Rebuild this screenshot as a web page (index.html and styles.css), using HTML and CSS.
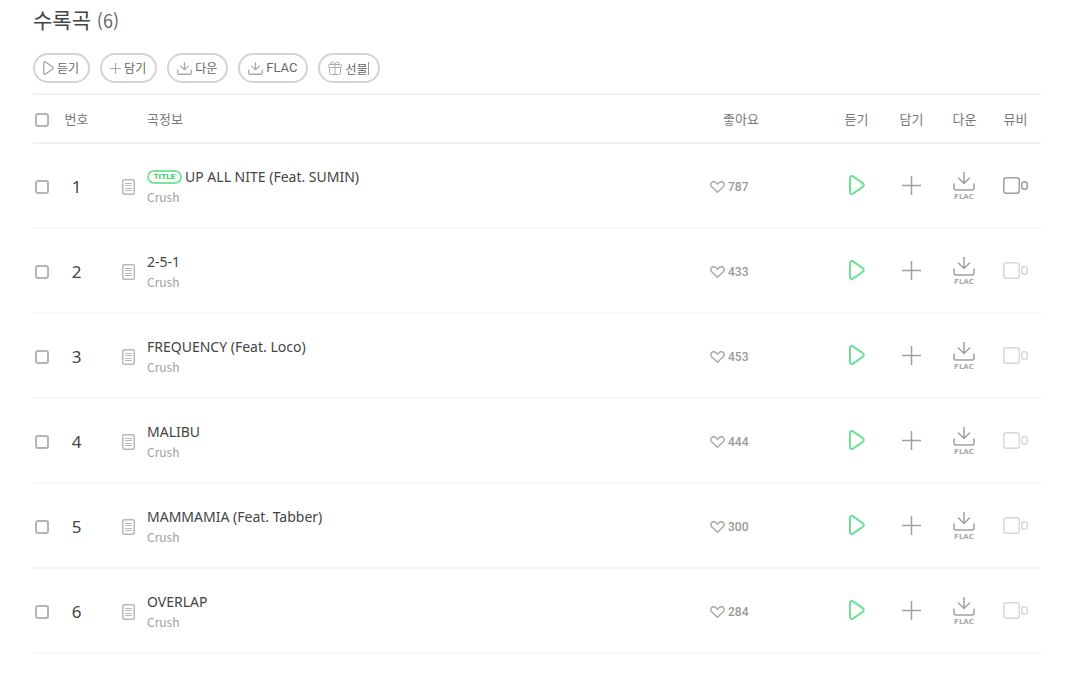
FILE: index.html
```html
<!DOCTYPE html>
<html lang="ko">
<head>
<meta charset="utf-8">
<title>수록곡</title>
<link rel="stylesheet" href="styles.css">
</head>
<body>
<svg class="sprite" aria-hidden="true">
  <symbol id="play" viewBox="0 0 16 20"><path d="M1 3v14c0 1.900 1.500 2.600 3 1.600l9.700-6.700c1.400-1 1.400-2.800 0-3.800L4 1.400C2.500.4 1 1.100 1 3z"/></symbol>
  <symbol id="download" viewBox="0 0 22 19"><path d="M11 0v11M5.500 6l5.500 5.500L16.500 6M1 12v4c0 1.200.8 2 2 2h16c1.200 0 2-.8 2-2v-4"/></symbol>
  <symbol id="plus" viewBox="0 0 19 19"><path d="M9.500 0v19M0 9.500h19"/></symbol>
  <symbol id="gift" viewBox="0 0 14 14"><path d="M1.500 3.500h11c.6 0 1 .4 1 1v1c0 .6-.4 1-1 1h-11c-.6 0-1-.4-1-1v-1c0-.6.4-1 1-1zM1.500 6.500v5c0 1.200.8 2 2 2h7c1.200 0 2-.8 2-2v-5M7 3.500v10M7 3.500C6 .5 3 0 3 2c0 1 .7 1.500 1.500 1.500M7 3.500C8 .5 11 0 11 2c0 1-.7 1.500-1.500 1.500"/></symbol>
  <symbol id="lyrics" viewBox="0 0 13 16"><rect x=".75" y=".75" width="11.500" height="14.500" rx="1.500" stroke-width="1.500"/><path d="M3.500 4.500h6M3.500 6.500h6M3.500 9.500h6M3.500 11.500h6"/></symbol>
  <symbol id="heart" viewBox="0 0 15 12"><path d="M7.500 11.200L1.700 5.800C.4 4.500.5 2.500 1.700 1.500c1.300-1.100 3.200-.9 4.300.2l1.500 1.500L9 1.700c1.100-1.100 3-1.300 4.300-.2 1.200 1 1.300 3 0 4.300z"/></symbol>
  <symbol id="video" viewBox="0 0 26 17"><rect x=".75" y=".75" width="15.500" height="15.500" rx="2.500"/><rect x="18.750" y="4.750" width="5.500" height="7.500" rx="2.500"/></symbol>
</svg>
<main class="tracks">
  <h1 class="heading">수록곡 <span class="count">(6)</span></h1>
  <div class="actions">
    <button class="pill" type="button"><svg class="pill-play"><use href="#play"/></svg>듣기</button>
    <button class="pill" type="button"><svg class="pill-plus"><use href="#plus"/></svg>담기</button>
    <button class="pill" type="button"><svg class="pill-down"><use href="#download"/></svg>다운</button>
    <button class="pill" type="button"><svg class="pill-down"><use href="#download"/></svg><span class="latin">FLAC</span></button>
    <button class="pill" type="button"><svg class="pill-gift"><use href="#gift"/></svg><span class="gift-label">선물</span></button>
  </div>
  <table class="list">
    <colgroup><col class="c-check"><col class="c-num"><col class="c-lyrics"><col><col class="c-like"><col class="c-play"><col class="c-play"><col class="c-down"><col class="c-down"></colgroup>
    <thead>
      <tr><th class="check"><input type="checkbox" aria-label="전체 선택"></th><th>번호</th><th></th><th class="song">곡정보</th><th class="like-head">좋아요</th><th>듣기</th><th>담기</th><th>다운</th><th>뮤비</th></tr>
    </thead>
    <tbody id="rows"></tbody>
  </table>
</main>
<script src="tracks.js"></script>
</body>
</html>
```

FILE: styles.css
```css
* { box-sizing: border-box; }
body { margin: 0; background: #fff; color: #444; font-family: "Noto Sans", "Noto Sans CJK KR", sans-serif; }
.sprite { display: none; }
svg { display: block; fill: none; stroke: currentColor; stroke-linecap: round; stroke-linejoin: round; flex: none; overflow: visible; }
button { padding: 0; border: 0; background: none; font: inherit; color: inherit; cursor: pointer; }
a { color: inherit; text-decoration: none; }
.tracks { padding: 4px 25px 32px 33px; }
.heading { margin: 0; font-family: "Noto Sans CJK KR", sans-serif; font-size: 21px; line-height: 30px; font-weight: 400; }
.count { color: #666; font-size: 18px; }
.actions { display: flex; gap: 10px; margin: 18px 0 10px; }
.pill { display: flex; align-items: center; gap: 3px; height: 30px; padding: 0 9px 0 8px; border: 2px solid #d4d4d4; border-radius: 15px; font-family: "Noto Sans CJK KR", sans-serif; font-size: 12px; line-height: 16px; color: #666; }
.pill svg { color: #aaa; }
.latin { font-family: Roboto, sans-serif; font-size: 13px; }
.gift-label { line-height: 13px; border-right: 1px solid #999; }
.pill-play { width: 11px; height: 14px; stroke-width: 2px; }
.pill-plus { width: 11px; height: 11px; stroke-width: 2px; }
.pill-down { width: 15px; height: 13px; stroke-width: 2px; }
.pill-gift { width: 14px; height: 14px; }
.list { width: 100%; table-layout: fixed; border-collapse: separate; border-spacing: 0; border-top: 2px solid #f0f0f0; }
.c-check { width: 26px; }
.c-num { width: 35px; }
.c-lyrics { width: 53px; }
.c-like { width: 128px; }
.c-play { width: 55px; }
.c-down { width: 51px; }
th, td { padding: 0; vertical-align: middle; text-align: center; }
th { height: 49px; border-bottom: 2px solid #f0f0f0; font-family: "Noto Sans CJK KR", sans-serif; font-size: 13px; line-height: 16px; font-weight: 400; color: #777; }
td { height: 85px; border-bottom: 2px solid #f7f7f7; }
.check { text-align: left; padding-left: 2px; }
.check input { display: block; appearance: none; width: 14px; height: 14px; margin: 3px 0 0; border: 2px solid #b4b4b4; border-radius: 3px; background: #fff; }
.check input:checked { background: #4cd97b; }
.song { text-align: left; }
.like-head { padding-right: 48px; }
.num { padding-top: 1px; font-size: 17px; color: #444; }
.lyrics { display: block; margin: 3px 0 0 28px; color: #b8b8b8; }
.lyrics svg { width: 13px; height: 16px; }
.name { display: flex; align-items: center; gap: 3px; padding-top: 2px; font-size: 14px; line-height: 20px; color: #444; }
.badge { display: flex; align-items: center; justify-content: center; height: 14px; width: 35px; border: 2px solid #7de49e; border-radius: 7px; font: bold 7px/8px "DejaVu Sans", sans-serif; color: #3dd56d; }
.artist { display: block; font: 12px/20px "Noto Sans CJK KR", sans-serif; color: #a0a0a0; }
.like { display: flex; align-items: center; gap: 3px; margin: 3px 0 0 9px; color: #999; font: 500 12px/16px Roboto, sans-serif; }
.like svg { width: 15px; height: 12px; stroke-width: 1.5px; color: #aaa; }
.icon { display: block; margin: 0 auto; color: #a0a0a0; }
.icon-play { color: #6fe096; }
.icon-play svg { width: 16px; height: 20px; stroke-width: 2px; }
.icon-play { padding-bottom: 1px; }
.icon-plus svg { width: 19px; height: 19px; stroke-width: 1.5px; }
.icon-down { padding: 2px 1px 0 0; }
.icon-down svg { width: 22px; height: 19px; stroke-width: 1.5px; }
.icon-video svg { width: 26px; height: 17px; stroke-width: 1.5px; }
.icon-video:disabled { color: #d8d8d8; }
.quality { display: block; margin-top: 2px; font: bold 7px/9px "DejaVu Sans", sans-serif; color: #aaa; }
```

FILE: tracks.js
```js
const tracks = [
  ["UP ALL NITE (Feat. SUMIN)", 787, true],
  ["2-5-1", 433],
  ["FREQUENCY (Feat. Loco)", 453],
  ["MALIBU", 444],
  ["MAMMAMIA (Feat. Tabber)", 300],
  ["OVERLAP", 284]
];
document.getElementById("rows").innerHTML = tracks.map(([name, likes, title], i) => `
<tr>
  <td class="check"><input type="checkbox" aria-label="${name} 선택"></td>
  <td class="num">${i + 1}</td>
  <td><button class="lyrics" type="button" aria-label="가사"><svg><use href="#lyrics"/></svg></button></td>
  <td class="song"><div class="name">${title ? '<span class="badge">TITLE</span>' : ""}<a href="#">${name}</a></div><a class="artist" href="#">Crush</a></td>
  <td><button class="like" type="button" aria-label="좋아요 ${likes}"><svg><use href="#heart"/></svg>${likes}</button></td>
  <td><button class="icon icon-play" type="button" aria-label="듣기"><svg><use href="#play"/></svg></button></td>
  <td><button class="icon icon-plus" type="button" aria-label="담기"><svg><use href="#plus"/></svg></button></td>
  <td><button class="icon icon-down" type="button" aria-label="다운"><svg><use href="#download"/></svg><span class="quality">FLAC</span></button></td>
  <td><button class="icon icon-video" type="button" aria-label="뮤비"${title ? "" : " disabled"}><svg><use href="#video"/></svg></button></td>
</tr>`).join("");
```
